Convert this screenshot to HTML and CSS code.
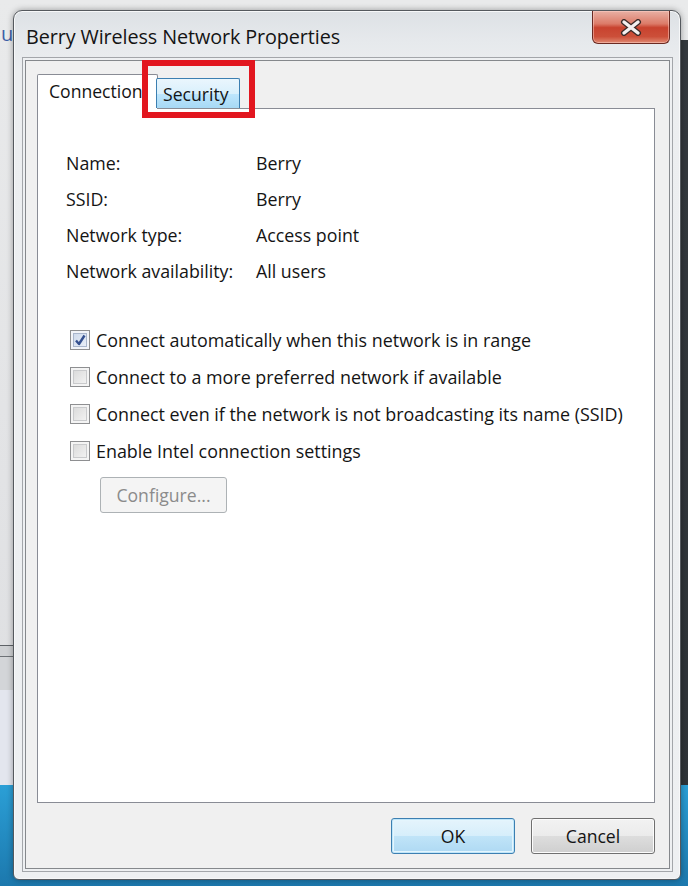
FILE: index.html
```html
<!DOCTYPE html>
<html lang="en">
<head>
<meta charset="utf-8">
<title>Berry Wireless Network Properties</title>
<link rel="stylesheet" href="styles.css">
</head>
<body>
<div class="desktop">
  <span class="behind-letter">u</span>
  <div class="window">
    <div class="titlebar">
      <span class="title">Berry Wireless Network Properties</span>
      <button class="close" aria-label="Close">
        <svg width="22" height="17" viewBox="0 0 22 17">
          <path d="M4 3 L18 14 M18 3 L4 14" stroke="#3b2a28" stroke-width="6" stroke-linecap="round" fill="none"/>
          <path d="M4 3 L18 14 M18 3 L4 14" stroke="#f4f0f0" stroke-width="3.4" stroke-linecap="round" fill="none"/>
        </svg>
      </button>
    </div>
    <div class="client">
      <div class="tabs">
        <div class="tab tab-active">Connection</div>
        <div class="tab tab-hover">Security</div>
      </div>
      <div class="panel">
        <div class="info">
          <span>Name:</span><span>Berry</span>
          <span>SSID:</span><span>Berry</span>
          <span>Network type:</span><span>Access point</span>
          <span>Network availability:</span><span>All users</span>
        </div>
        <div class="checks">
          <label class="check"><span class="box checked"><svg width="14" height="14" viewBox="0 0 14 14"><path d="M3 7.5 L6 11 L11.5 2.5" stroke="#34508f" stroke-width="2.4" fill="none" stroke-linejoin="round"/></svg></span>Connect automatically when this network is in range</label>
          <label class="check"><span class="box"></span>Connect to a more preferred network if available</label>
          <label class="check"><span class="box"></span>Connect even if the network is not broadcasting its name (SSID)</label>
          <label class="check"><span class="box"></span>Enable Intel connection settings</label>
        </div>
        <button class="configure" disabled>Configure...</button>
      </div>
      <div class="actions">
        <button class="btn btn-default">OK</button>
        <button class="btn">Cancel</button>
      </div>
    </div>
    <div class="highlight"></div>
  </div>
</div>
</body>
</html>
```

FILE: styles.css
```css
html, body {
  margin: 0;
  padding: 0;
}

body {
  width: 688px;
  height: 886px;
  overflow: hidden;
  font-family: "Open Sans", "Noto Sans", sans-serif;
  background:
    linear-gradient(to bottom, #2b9fd6, #1c78ad) 0 785px / 100% 101px no-repeat,
    linear-gradient(to bottom, #5e6267 0 1px, #cfd1d4 1px 11px, #6e7277 11px 12px, #d3d5d8 12px 45px, #e3e6ee 45px) 0 645px / 13px 140px no-repeat,
    linear-gradient(#34393e, #2d3236) right 0 top 40px / 7px 100% no-repeat,
    linear-gradient(to bottom, #e9eaeb, #dcdde0);
}

.desktop {
  position: relative;
  padding: 10px 0 0 13px;
}

.behind-letter {
  position: absolute;
  left: 1px;
  top: 20px;
  font-size: 20px;
  color: #3c5ea6;
}

.window {
  position: relative;
  width: 668px;
  height: 870px;
  box-sizing: border-box;
  padding: 0 10px 10px 11px;
  display: flex;
  flex-direction: column;
  border: 1px solid #55595e;
  border-radius: 9px 9px 6px 6px;
  background: linear-gradient(to bottom, #dde1e5 0, #e6e9ec 30px, #eceef0 60px, #eef0f2 100%);
  box-shadow: inset 0 0 0 1px #f7f8f9, 0 0 6px rgba(0, 0, 0, 0.35);
}

.titlebar {
  height: 49px;
  display: flex;
  align-items: flex-start;
}

.title {
  align-self: center;
  padding: 2px 0 0 1px;
  font-size: 19.8px;
  color: #141414;
  letter-spacing: -0.1px;
}

.close {
  margin-left: auto;
  margin-right: 0;
  width: 78px;
  height: 33px;
  padding: 0;
  display: flex;
  align-items: center;
  justify-content: center;
  border: 1px solid #6b2a22;
  border-top: none;
  border-radius: 0 0 6px 6px;
  background: linear-gradient(to bottom, #e8b0a4 0, #dc7b68 40%, #c8432f 52%, #cc4f39 80%, #e08a72 100%);
  box-shadow: inset 0 0 0 1px rgba(255, 210, 200, 0.5);
}

.client {
  flex: 1;
  display: flex;
  flex-direction: column;
  box-sizing: border-box;
  padding: 13px 14px 14px 11px;
  background: #f0f0f0;
  border: 1px solid #85888c;
  box-shadow: 0 0 0 2px #eef0f2, 0 0 0 3px #a3a6aa;
}

.tabs {
  height: 34px;
  display: flex;
  align-items: flex-end;
  position: relative;
  z-index: 1;
}

.tab {
  box-sizing: border-box;
  font-size: 17.6px;
  color: #141414;
  border: 1px solid #898c95;
  border-bottom: none;
  border-radius: 2px 2px 0 0;
}

.tab-active {
  width: 121px;
  height: 35px;
  margin-bottom: -1px;
  padding: 4px 0 0 11px;
  background: #ffffff;
}

.tab-hover {
  width: 84px;
  height: 30px;
  margin-left: -2px;
  padding: 3px 0 0 6px;
  border-color: #3c7fb1;
  background: linear-gradient(to bottom, #eaf6fd 0, #d9f0fc 50%, #bee6fd 51%, #a7d9f5 100%);
}

.panel {
  flex: 1;
  display: flex;
  flex-direction: column;
  align-items: flex-start;
  padding: 36px 0 0 28px;
  background: #ffffff;
  border: 1px solid #898c95;
}

.info {
  display: grid;
  grid-template-columns: 190px auto;
  grid-auto-rows: 36px;
  align-items: center;
  font-size: 17.8px;
  color: #141414;
}

.checks {
  margin-top: 32px;
  margin-left: 4px;
  display: flex;
  flex-direction: column;
}

.check {
  height: 37px;
  display: flex;
  align-items: center;
  gap: 6px;
  font-size: 17.9px;
  color: #141414;
}

.box {
  width: 20px;
  height: 20px;
  box-sizing: border-box;
  border: 1px solid #8e8f91;
  background: #f4f4f4;
  box-shadow: inset 0 0 0 2px #f4f4f4, inset 0 0 0 3px #c9cacc;
  background-image: linear-gradient(135deg, #d6d6d6, #f7f7f7);
  display: flex;
  align-items: center;
  justify-content: center;
}

.box.checked {
  background-image: linear-gradient(135deg, #c9d6ea, #eef2f9);
  box-shadow: inset 0 0 0 2px #f2f4f8, inset 0 0 0 3px #a9b6cc;
}

.configure {
  margin: 8px 0 0 34px;
  width: 127px;
  height: 36px;
  font-family: inherit;
  font-size: 17.6px;
  color: #8b8b8b;
  background: #f4f4f4;
  border: 1px solid #adb2b5;
  border-radius: 3px;
}

.actions {
  margin-top: 15px;
  display: flex;
  justify-content: flex-end;
  gap: 16px;
}

.btn {
  width: 124px;
  height: 36px;
  font-family: inherit;
  font-size: 17.6px;
  color: #141414;
  border: 1px solid #707070;
  border-radius: 3px;
  background: linear-gradient(to bottom, #f2f2f2 0, #ebebeb 50%, #dddddd 51%, #cfcfcf 100%);
  box-shadow: inset 0 0 0 1px #fcfcfc;
}

.btn-default {
  border-color: #3c7fb1;
  background: linear-gradient(to bottom, #e5f4fc 0, #d6eefb 50%, #c0e4f8 51%, #aed9f3 100%);
  box-shadow: inset 0 0 0 1px #bfe6fa, inset 0 0 0 2px #e4f5fd;
}

.highlight {
  position: absolute;
  left: 128px;
  top: 49px;
  width: 113px;
  height: 58px;
  box-sizing: border-box;
  border: 6px solid #e2161f;
  z-index: 5;
}
```
